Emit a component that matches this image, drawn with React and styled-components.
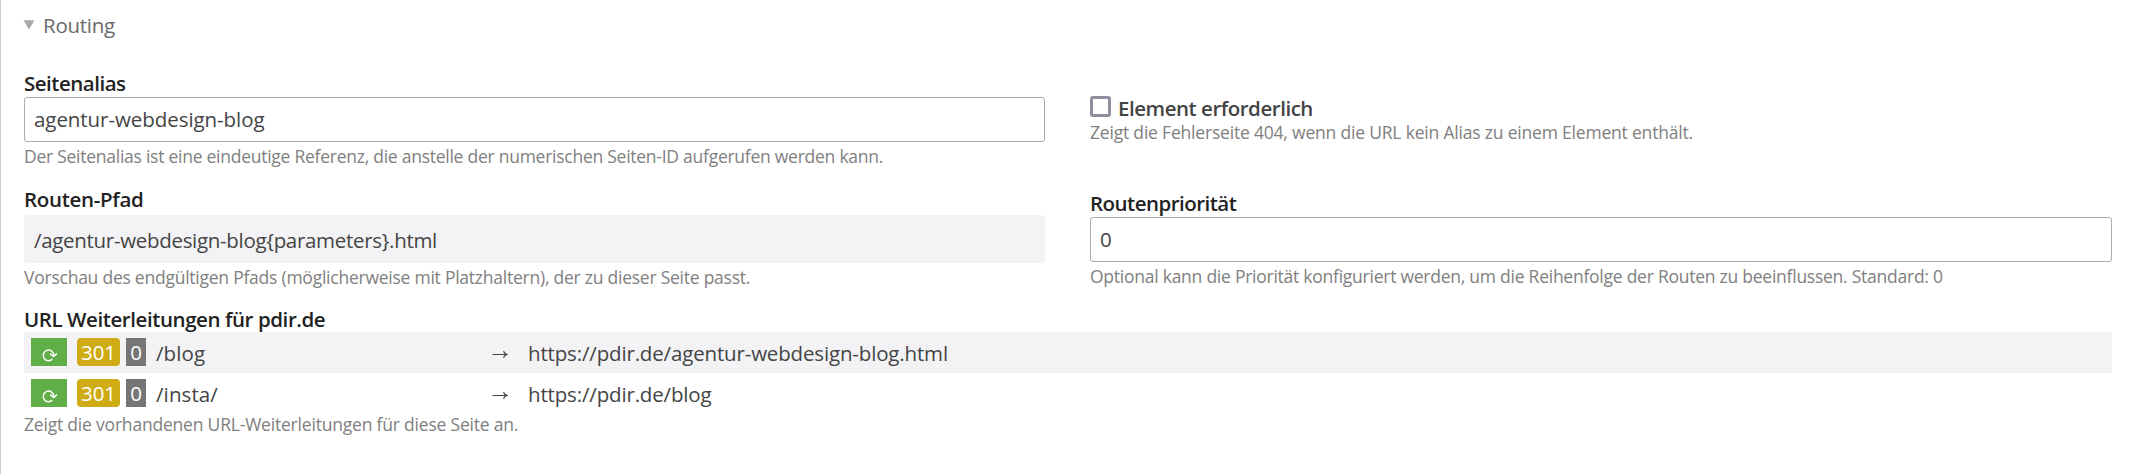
import React from 'react';
import styled, { createGlobalStyle } from 'styled-components';

const GlobalStyle = createGlobalStyle`
  *, *::before, *::after { box-sizing: border-box; }
  body {
    margin: 0;
    background: #fff;
    color: #444;
    font: 400 20.5px/26px "Open Sans", "Noto Sans", sans-serif;
  }
`;

const Fieldset = styled.section`
  height: 474px;
  padding: 12px 21px 0 23px;
  border-left: 1px solid #ccc;
`;

const Legend = styled.div`
  display: flex;
  align-items: flex-start;
  height: 58px;
  color: #6a6a6a;
  letter-spacing: -0.25px;
`;

const Triangle = styled.svg`
  width: 12px;
  height: 10px;
  margin: 8px 8px 0 -1px;
`;

const Columns = styled.div`
  display: grid;
  grid-template-columns: 1021px 1fr;
  column-gap: 45px;
`;

const Column = styled.div`
  padding-top: ${(p) => p.$top || 0}px;
`;

const Widget = styled.div`
  margin-bottom: ${(p) => p.$gap || 0}px;
`;

const Label = styled.h3`
  margin: 0;
  color: #222;
  font-size: inherit;
  font-weight: 600;
  line-height: 26px;
  letter-spacing: ${(p) => p.$tracking || 0}px;
`;

const TextInput = styled.input`
  display: block;
  width: 100%;
  height: 45px;
  margin: 1px 0 2px;
  padding: 0 9px 1px;
  border: 1px solid #aaa;
  border-radius: 3px;
  background: #fff;
  color: #444;
  font: inherit;
  letter-spacing: -0.06px;
  outline: none;
`;

const Preview = styled.div`
  height: 48px;
  margin: 3px 0 2px;
  padding: 0 10px;
  border-radius: 4px;
  background: #f3f3f5;
  line-height: 50px;
  letter-spacing: -0.31px;
`;

const Help = styled.p`
  margin: 0;
  color: #808080;
  font-size: 17.5px;
  line-height: ${(p) => p.$line || 24}px;
  letter-spacing: ${(p) => p.$tracking}px;
  white-space: nowrap;
`;

const CheckRow = styled.label`
  display: flex;
  height: 26px;
  gap: 7px;
  font-weight: 600;
  letter-spacing: -0.47px;
`;

const Checkbox = styled.input`
  appearance: none;
  width: 21px;
  height: 21px;
  margin: 1px 0 0;
  border: 3px solid #8f8e9f;
  border-radius: 3px;
  background: #fff;
`;

const RedirectRow = styled.div`
  display: flex;
  align-items: center;
  height: 41px;
  padding-left: 7px;
  background: ${(p) => (p.$shaded ? '#f3f3f5' : 'transparent')};
  line-height: 42px;
`;

const Badge = styled.span`
  display: flex;
  align-items: center;
  justify-content: center;
  width: ${(p) => p.$width}px;
  height: 28px;
  margin: 0 ${(p) => p.$after}px 1px 0;
  border-radius: ${(p) => p.$radius || 0}px;
  background: ${(p) => p.$color};
  color: #fff;
  line-height: 30px;
`;

const SourcePath = styled.span`
  width: 336px;
  letter-spacing: 0.1px;
`;

const ArrowIcon = styled.svg`
  width: 16px;
  height: 9px;
  margin-top: 3px;
  margin-right: 20px;
`;

const Target = styled.span`
  letter-spacing: -0.16px;
`;

const ReloadIcon = styled.svg`
  width: 17px;
  height: 14px;
  margin: 5px 0 0 1px;
`;

const redirects = [
  { from: '/blog', to: 'https://pdir.de/agentur-webdesign-blog.html' },
  { from: '/insta/', to: 'https://pdir.de/blog' },
];

function Redirect({ from, to, shaded }) {
  return (
    <RedirectRow $shaded={shaded}>
      <Badge $width={36} $after={10} $color="#5fae48">
        <ReloadIcon viewBox="0 0 17 14" fill="none">
          <path d="M11.4 11A5.3 5.3 0 1 1 12.8 6.8" stroke="#fff" strokeWidth="1.5" />
          <path d="M9.2 5.6L12.6 8.6L15.9 5.6" stroke="#fff" strokeWidth="1.5" />
        </ReloadIcon>
      </Badge>
      <Badge $width={43} $after={6} $radius={4} $color="#cfac13">301</Badge>
      <Badge $width={20} $after={10} $color="#767676">0</Badge>
      <SourcePath>{from}</SourcePath>
      <ArrowIcon viewBox="0 0 16 9" fill="none" stroke="#444" strokeWidth="1.2">
        <path d="M0.5 4.5H14.5M11.5 1.2Q12.5 3.7 15 4.5Q12.5 5.3 11.5 7.8" />
      </ArrowIcon>
      <Target>{to}</Target>
    </RedirectRow>
  );
}

export default function App() {
  return (
    <>
      <GlobalStyle />
      <Fieldset>
        <Legend>
          <Triangle viewBox="0 0 12 10">
            <path d="M0.5 0.2H11.5L6 9.4Z" fill="#aaa" />
          </Triangle>
          Routing
        </Legend>
        <Columns>
          <Column>
            <Widget $gap={18}>
              <Label $tracking={-0.49}>Seitenalias</Label>
              <TextInput defaultValue="agentur-webdesign-blog" />
              <Help $tracking={-0.256}>
                Der Seitenalias ist eine eindeutige Referenz, die anstelle der numerischen Seiten-ID aufgerufen werden kann.
              </Help>
            </Widget>
            <Widget $gap={17}>
              <Label $tracking={-0.3}>Routen-Pfad</Label>
              <Preview>{'/agentur-webdesign-blog{parameters}.html'}</Preview>
              <Help $tracking={-0.24}>
                Vorschau des endgültigen Pfads (möglicherweise mit Platzhaltern), der zu dieser Seite passt.
              </Help>
            </Widget>
          </Column>
          <Column $top={25}>
            <Widget $gap={47}>
              <CheckRow>
                <Checkbox type="checkbox" />
                Element erforderlich
              </CheckRow>
              <Help $line={22} $tracking={-0.195}>
                Zeigt die Fehlerseite 404, wenn die URL kein Alias zu einem Element enthält.
              </Help>
            </Widget>
            <Widget>
              <Label $tracking={-0.52}>Routenpriorität</Label>
              <TextInput defaultValue="0" />
              <Help $tracking={-0.248}>
                Optional kann die Priorität konfiguriert werden, um die Reihenfolge der Routen zu beeinflussen. Standard: 0
              </Help>
            </Widget>
          </Column>
        </Columns>
        <Label $tracking={-0.42}>URL Weiterleitungen für pdir.de</Label>
        {redirects.map((r, i) => (
          <Redirect key={r.from} from={r.from} to={r.to} shaded={i % 2 === 0} />
        ))}
        <Help $line={20} $tracking={-0.2}>
          Zeigt die vorhandenen URL-Weiterleitungen für diese Seite an.
        </Help>
      </Fieldset>
    </>
  );
}
